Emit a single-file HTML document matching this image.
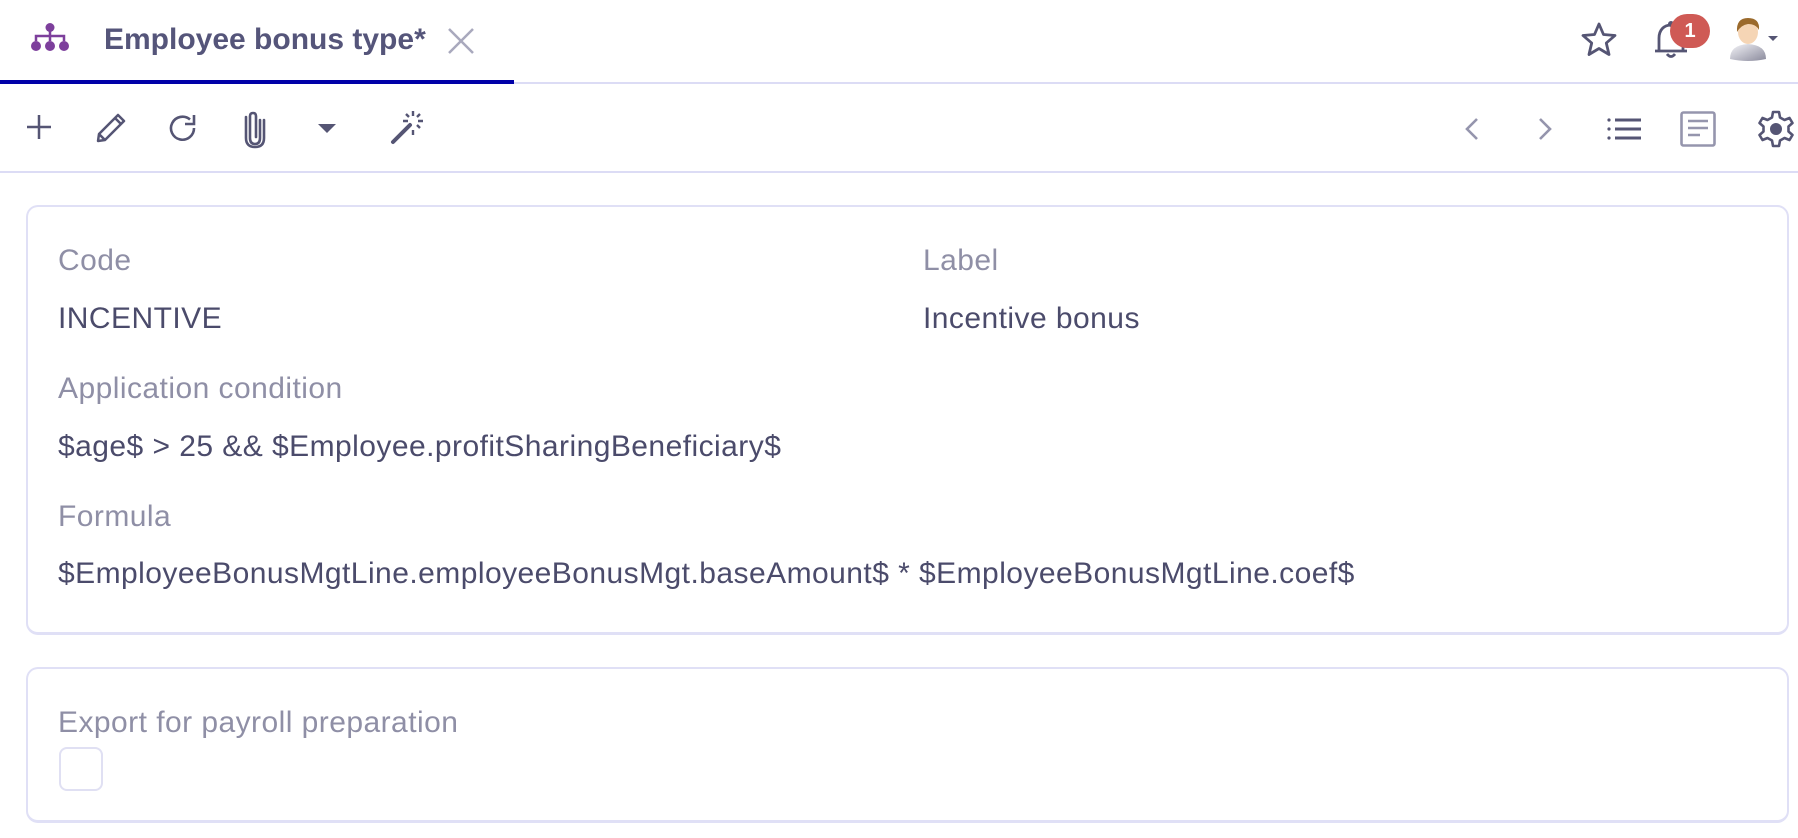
<!DOCTYPE html>
<html><head><meta charset="utf-8"><style>
*{margin:0;padding:0;box-sizing:border-box}
body{width:1798px;height:838px;background:#fff;font-family:"Liberation Sans",sans-serif;position:relative;overflow:hidden}
.a{position:absolute}
.t{position:absolute;white-space:nowrap;font-size:30px;line-height:30px;letter-spacing:0.45px}
.lbl{color:#8f8fa6}
.val{color:#4b4b6b}
.card{position:absolute;left:26px;width:1763px;border:2px solid #e0e0f6;border-bottom-width:3px;border-radius:12px;background:#fff}
svg{position:absolute;overflow:visible}
</style></head><body>
<svg style="left:31px;top:23px" width="38" height="28" viewBox="0 0 38 28">
<g fill="#7d3f9c"><circle cx="19" cy="4.5" r="4.5"/><circle cx="5" cy="23" r="5"/><circle cx="19" cy="23" r="5"/><circle cx="33" cy="23" r="5"/></g>
<g stroke="#7d3f9c" stroke-width="2.5" fill="none"><path d="M19 8V18M5 18V13H33V18"/></g>
</svg>
<div class="t" style="left:104px;top:25px;font-weight:bold;color:#55557a;letter-spacing:0">Employee bonus type*</div>
<svg style="left:448px;top:28px" width="26" height="26" viewBox="0 0 26 26"><path d="M1 1L25 25M25 1L1 25" stroke="#a9a9bd" stroke-width="2.5"/></svg>
<div class="a" style="left:0;top:82px;width:1798px;height:2px;background:#dcdcf5"></div>
<div class="a" style="left:0;top:80px;width:514px;height:4px;background:#0000a8"></div>

<svg style="left:1581px;top:22px" width="36" height="34" viewBox="0 0 36 34"><path d="M18 2L22.5 12.5L34 13.5L25.3 21L28 32.5L18 26.5L8 32.5L10.7 21L2 13.5L13.5 12.5Z" fill="none" stroke="#555574" stroke-width="2.8" stroke-linejoin="round"/></svg>
<svg style="left:1654px;top:20px" width="34" height="38" viewBox="0 0 34 38"><path d="M5 31V18C5 10 10 5 17 5S29 10 29 18V31M1 31H33M13 34Q17 39 21 34" fill="none" stroke="#555574" stroke-width="2.8"/><circle cx="17" cy="4" r="3" fill="#555574"/></svg>
<div class="a" style="left:1670px;top:14px;width:40px;height:34px;border-radius:17px;background:#cf5a55;color:#fff;font-weight:bold;font-size:20px;line-height:34px;text-align:center">1</div>
<svg style="left:1728px;top:15px" width="40" height="46" viewBox="0 0 40 46">
<defs><linearGradient id="g1" x1="0" y1="0" x2="1" y2="1"><stop offset="0" stop-color="#f4f4f8"/><stop offset="1" stop-color="#8a8a9c"/></linearGradient></defs>
<path d="M2 44Q2 30 20 29Q38 30 38 44Q20 48 2 44Z" fill="url(#g1)"/>
<ellipse cx="20" cy="17" rx="10" ry="12" fill="#f5d5b5"/>
<path d="M9 17Q8 3 20 3Q32 3 31 15Q28 9 20 9Q13 10 9 17Z" fill="#9b6a2c"/>
</svg>
<svg style="left:1768px;top:36px" width="10" height="6"><path d="M0 0H10L5 5Z" fill="#555574"/></svg>

<svg style="left:27px;top:115px" width="24" height="24" viewBox="0 0 24 24"><path d="M12 0V24M0 12H24" stroke="#555574" stroke-width="2.5"/></svg>
<svg style="left:94px;top:111px" width="34" height="34" viewBox="0 0 34 34"><path d="M4 30L5 23L24 4L30 10L11 29Z M21 7L27 13 M5 23L11 29" fill="none" stroke="#555574" stroke-width="2.5" stroke-linejoin="round"/></svg>
<svg style="left:168px;top:113px" width="30" height="30" viewBox="0 0 30 30"><path d="M26 15A11.5 11.5 0 1 1 22 6.5" fill="none" stroke="#555574" stroke-width="2.6"/><path d="M26 2V11H17" fill="none" stroke="#555574" stroke-width="2.6"/></svg>
<svg style="left:244px;top:110px" width="22" height="38" viewBox="0 0 22 38"><path d="M16 10V28Q16 34 11 34Q6 34 6 28V6Q6 3 9 3Q12 3 12 6V27" fill="none" stroke="#555574" stroke-width="2.6" stroke-linecap="round"/><path d="M20 10V28Q20 37 11 37Q2 37 2 28V7" fill="none" stroke="#555574" stroke-width="2.6" stroke-linecap="round"/></svg>
<svg style="left:318px;top:124px" width="18" height="10"><path d="M0 0H18L9 9Z" fill="#555574"/></svg>
<svg style="left:390px;top:109px" width="36" height="36" viewBox="0 0 36 36"><path d="M3 33L20 16" stroke="#555574" stroke-width="4" stroke-linecap="round"/><path d="M23 2V7M23 21V26M13 12H18M28 12H33M16 5L19 8M30 5L27 8M30 19L27 16" stroke="#555574" stroke-width="2.4"/></svg>

<svg style="left:1465px;top:117px" width="14" height="24" viewBox="0 0 14 24"><path d="M12 2L2 12L12 22" fill="none" stroke="#9595ad" stroke-width="2.6"/></svg>
<svg style="left:1538px;top:117px" width="14" height="24" viewBox="0 0 14 24"><path d="M2 2L12 12L2 22" fill="none" stroke="#9595ad" stroke-width="2.6"/></svg>
<svg style="left:1607px;top:118px" width="34" height="22" viewBox="0 0 34 22"><g fill="#555574"><circle cx="2" cy="2" r="1.6"/><circle cx="2" cy="11" r="1.6"/><circle cx="2" cy="20" r="1.6"/><rect x="8" y="0.5" width="26" height="3"/><rect x="8" y="9.5" width="26" height="3"/><rect x="8" y="18.5" width="26" height="3"/></g></svg>
<svg style="left:1680px;top:111px" width="36" height="36" viewBox="0 0 36 36"><rect x="1.5" y="1.5" width="33" height="33" rx="2" fill="none" stroke="#9595ad" stroke-width="2.6"/><path d="M8 10H28M8 17H28M8 24H20" stroke="#9595ad" stroke-width="2.6"/></svg>
<svg style="left:1757px;top:110px" width="38" height="38" viewBox="0 0 38 38">
<g fill="none" stroke="#555574" stroke-width="2.6" stroke-linejoin="round"><path d="M16 2H22L23 7.5L27.5 10L32.5 8L35.5 13L31.5 16.5V21.5L35.5 25L32.5 30L27.5 28L23 30.5L22 36H16L15 30.5L10.5 28L5.5 30L2.5 25L6.5 21.5V16.5L2.5 13L5.5 8L10.5 10L15 7.5Z"/></g><circle cx="19" cy="19" r="6" fill="#555574"/></svg>
<div class="a" style="left:0;top:171px;width:1798px;height:2px;background:#dcdcf5"></div>

<div class="card" style="top:205px;height:430px"></div>
<div class="t lbl" style="left:58px;top:246px">Code</div>
<div class="t lbl" style="left:923px;top:246px">Label</div>
<div class="t val" style="left:58px;top:304px">INCENTIVE</div>
<div class="t val" style="left:923px;top:304px">Incentive bonus</div>
<div class="t lbl" style="left:58px;top:374px">Application condition</div>
<div class="t val" style="left:58px;top:432px">$age$ &gt; 25 &amp;&amp; $Employee.profitSharingBeneficiary$</div>
<div class="t lbl" style="left:58px;top:502px">Formula</div>
<div class="t val" style="left:58px;top:559px">$EmployeeBonusMgtLine.employeeBonusMgt.baseAmount$ * $EmployeeBonusMgtLine.coef$</div>

<div class="card" style="top:667px;height:156px"></div>
<div class="t lbl" style="left:58px;top:708px">Export for payroll preparation</div>
<div class="a" style="left:59px;top:747px;width:44px;height:44px;border:2px solid #e0e0f3;border-radius:8px"></div>
</body></html>
